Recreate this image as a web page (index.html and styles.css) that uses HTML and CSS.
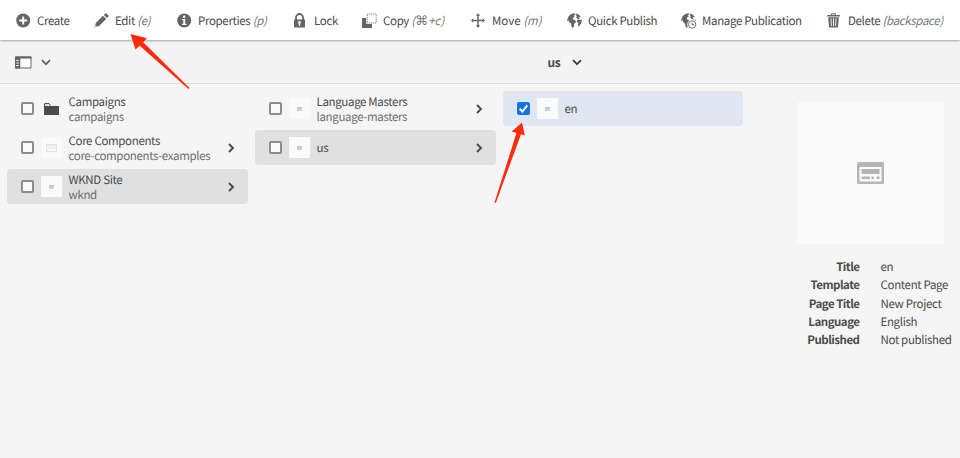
FILE: index.html
```html
<!DOCTYPE html>
<html lang="en">
<head>
<meta charset="utf-8">
<title>Sites</title>
<link rel="stylesheet" href="styles.css">
</head>
<body>
<svg class="defs" aria-hidden="true">
  <symbol id="chev" viewBox="0 0 8 10"><path d="M2 1l4 4-4 4" fill="none" stroke="currentColor" stroke-width="1.9"/></symbol>
  <symbol id="down" viewBox="0 0 10 7"><path d="M1 1.2l4 4 4-4" fill="none" stroke="currentColor" stroke-width="1.7"/></symbol>
  <symbol id="page" viewBox="0 0 27 22"><path fill-rule="evenodd" fill="currentColor" d="M1.5 0h24A1.5 1.5 0 0 1 27 1.500v19a1.500 1.500 0 0 1-1.500 1.500h-24A1.500 1.500 0 0 1 0 20.500v-19A1.500 1.500 0 0 1 1.500 0zM2.500 5v14.500h22V5zM4.500 7h18v5h-18zM4.500 14.500h8.500V17H4.500zM14.500 14.500H17V17h-2.500zM19.500 14.500h3V17h-3z"/></symbol>
  <symbol id="globe" viewBox="0 0 15 15"><path fill="currentColor" d="M5 .8L7.500.3l1 1-1.500 1 .6 1.200-1.600 1.300-.2 1.700 1.700.3 1.500 1.400-.5 1.600-1.300 1-.2 2.700-1.100 1.400L4.500 13.600l-.4-2.800-2-1.700-.6-2.200L.3 8.500C0 5.200 2 2 5 .8zM9.500.5c2 .7 3.700 2.200 4.500 4l-1.500-.6-.9.800 1 1.100-1.500.6-1.200-1.200-.8-.8.8-1.200-1-.9zM14.600 6.300c.4 3-.9 5.900-3.200 7.500l-.5-2 .6-1.700-1.700-1.300.5-1.600 2-.8 1.100.6z"/></symbol>
</svg>
<header class="toolbar">
  <div class="action">
    <svg class="icon" viewBox="0 0 15 15"><circle cx="7.200" cy="7.500" r="7" fill="currentColor"/><path d="M7.200 3.500v8M3.200 7.500h8" stroke="#fff" stroke-width="1.900"/></svg>
    <span class="label">Create</span>
  </div>
  <div class="action">
    <svg class="icon" viewBox="0 0 15 15"><path fill="currentColor" d="M.3 14.600l1.500-4.700L9 2.700l3.200 3.200L5 13.100zM9.800 1.900L11.400.4q.5-.4 1 0l2.100 2.100q.4.500 0 1L13 5.100z"/><path d="M1.500 11.900l1.500 1.500-2 .7z" fill="#fff"/></svg>
    <span class="label">Edit <i>(e)</i></span>
  </div>
  <div class="action">
    <svg class="icon" viewBox="0 0 15 15"><circle cx="7.200" cy="7.500" r="7" fill="currentColor"/><circle cx="7.200" cy="3.800" r="1.250" fill="#fff"/><path d="M5.200 6h3v4.800h1.300v1.300H5.100v-1.300h1.200V7.300H5.200z" fill="#fff"/></svg>
    <span class="label">Properties <i>(p)</i></span>
  </div>
  <div class="action">
    <svg class="icon" viewBox="0 0 15 15"><path fill="currentColor" d="M1 6.500h11v8H1z"/><path d="M3 7V4.500a3.500 3.500 0 0 1 7 0V7" fill="none" stroke="currentColor" stroke-width="1.800"/><circle cx="6.500" cy="9.500" r="1.400" fill="#fff"/><path d="M6.500 9.500v3.300" stroke="#fff" stroke-width="1.300"/></svg>
    <span class="label">Lock</span>
  </div>
  <div class="action">
    <svg class="icon" viewBox="0 0 15 15"><path fill="currentColor" d="M0 5h4.200v6H10v4H0z"/><path d="M5.200 1h9v9h-9z" fill="none" stroke="currentColor" stroke-width=".8" stroke-dasharray="1.200 .8"/></svg>
    <span class="label">Copy <i class="keys">(<span class="cmd">⌘</span>+c)</i></span>
  </div>
  <div class="action">
    <svg class="icon" viewBox="0 0 15 15"><path d="M7 2v11M1.500 7.500h11" stroke="currentColor" stroke-width="1.400"/><path fill="currentColor" d="M7 .3l2.200 2.500H4.800zM7 14.700l2.200-2.500H4.800zM0 7.500l2.300-2.200v4.400zM14 7.500l-2.300-2.200v4.400z"/></svg>
    <span class="label wide">Move <i>(m)</i></span>
  </div>
  <div class="action">
    <svg class="icon"><use href="#globe"/></svg>
    <span class="label">Quick Publish</span>
  </div>
  <div class="action">
    <svg class="icon" viewBox="0 0 15 15"><use href="#globe" width="15" height="15"/><circle cx="11.200" cy="11.500" r="5" fill="#fff"/><circle cx="11.200" cy="11.500" r="3.700" fill="#fff" stroke="currentColor" stroke-width=".9"/><path d="M11 9.300v2.400h2" fill="none" stroke="currentColor" stroke-width=".9"/></svg>
    <span class="label">Manage Publication</span>
  </div>
  <div class="action">
    <svg class="icon" viewBox="0 0 15 15"><path d="M4.500 2V.8h4V2" fill="none" stroke="currentColor"/><path fill="currentColor" d="M.2 1.900h12.600v1.600H.2zM1.200 4.300h10.600l-.8 10.300H2z"/><path d="M4 5.300l.4 7.900M6.500 5.300v7.900M9 5.300l-.4 7.900" stroke="#fff" stroke-width=".9"/></svg>
    <span class="label">Delete <i>(backspace)</i></span>
  </div>
</header>
<nav class="subbar">
  <div class="rail">
    <svg class="railicon" viewBox="0 0 17 13"><path d="M.5 1h15.500v11H.5z" fill="#fff" stroke="currentColor"/><path fill="currentColor" d="M0 .5h16.500v2H0zM0 .5h5.300V12.500H0z"/><path d="M1.300 4.500h2.400M1.300 7h2.400M1.300 9.500h2.400" stroke="#fff" stroke-width="1"/></svg>
    <svg class="down"><use href="#down"/></svg>
  </div>
  <div class="crumb"><b>us</b><svg class="down dark"><use href="#down"/></svg></div>
</nav>
<main class="content">
  <section class="column">
    <div class="row">
      <span class="box"></span>
      <span class="thumb bare"><svg class="folder" viewBox="0 0 15 12"><path fill="#4b4b4b" d="M0 3h15v9H0z"/><path d="M.5 3V1q0-.5.5-.5h4L6.500 2.500" fill="#ddd" stroke="#4b4b4b"/></svg></span>
      <div class="names"><span>Campaigns</span><small>campaigns</small></div>
    </div>
    <div class="row">
      <span class="box"></span>
      <span class="thumb"><svg class="component" viewBox="0 0 11 8"><path d="M.5.5h10v7H.5zM.5 2h10M2 4h3M6 4h3" fill="none" stroke="#e3e3e3"/></svg></span>
      <div class="names"><span>Core Components</span><small>core-components-examples</small></div>
      <svg class="chev"><use href="#chev"/></svg>
    </div>
    <div class="row open">
      <span class="box"></span>
      <span class="thumb"><svg class="mini"><use href="#page"/></svg></span>
      <div class="names"><span>WKND Site</span><small>wknd</small></div>
      <svg class="chev"><use href="#chev"/></svg>
    </div>
  </section>
  <section class="column">
    <div class="row">
      <span class="box"></span>
      <span class="thumb"><svg class="mini"><use href="#page"/></svg></span>
      <div class="names"><span>Language Masters</span><small>language-masters</small></div>
      <svg class="chev"><use href="#chev"/></svg>
    </div>
    <div class="row open">
      <span class="box"></span>
      <span class="thumb"><svg class="mini"><use href="#page"/></svg></span>
      <div class="names"><span>us</span></div>
      <svg class="chev"><use href="#chev"/></svg>
    </div>
  </section>
  <section class="column">
    <div class="row selected">
      <span class="box checked"><svg viewBox="0 0 12 12"><path d="M2.500 6.200l2.500 2.600 4.500-5.600" fill="none" stroke="#fff" stroke-width="1.800"/></svg></span>
      <span class="thumb"><svg class="mini"><use href="#page"/></svg></span>
      <div class="names"><span>en</span></div>
    </div>
  </section>
  <aside class="preview">
    <div class="card"><svg class="big"><use href="#page"/></svg></div>
    <dl class="meta">
      <dt>Title</dt><dd>en</dd>
      <dt>Template</dt><dd>Content Page</dd>
      <dt>Page Title</dt><dd>New Project</dd>
      <dt>Language</dt><dd>English</dd>
      <dt>Published</dt><dd>Not published</dd>
    </dl>
  </aside>
</main>
<svg class="pointers" viewBox="0 0 960 458" aria-hidden="true">
  <path fill="#ff2a0a" d="M130.500 34l16.500 4.200-3.800 4L189.500 88l-1 1-48.700-43.300-4.300 3.800z"/>
  <path fill="#ff2a0a" d="M522 122.500l2.800 13-3.800-1.200L495.800 203l-1.300-.5 22-69.500-4.800-1.500z"/>
</svg>
</body>
</html>
```

FILE: styles.css
```css
* { box-sizing: border-box; }
body {
  margin: 0;
  height: 458px;
  overflow: hidden;
  background: #f5f5f5;
  color: #4b4b4b;
  font: 11.5px/15px "Noto Sans CJK SC", "Noto Sans", sans-serif;
  letter-spacing: -.34px;
  text-rendering: geometricPrecision;
}
svg { display: block; flex: none; }
.defs { position: absolute; width: 0; height: 0; }
.toolbar {
  display: grid;
  grid-template-columns: 78px 83px 116px 69px 109px 96px 114px 146px auto;
  height: 40px;
  padding-left: 16px;
  align-items: center;
  background: #fff;
  box-shadow: 0 1px 2px rgba(0, 0, 0, .32);
  position: relative;
}
.action { display: flex; align-items: center; gap: 6px; white-space: nowrap; color: #656565; }
.icon { width: 15px; height: 15px; overflow: visible; }
.label { padding-top: 2px; color: #4b4b4b; }
.wide { letter-spacing: 0; }
.label i { color: #777; }
.keys { letter-spacing: 0; }
.cmd { font-family: "DejaVu Sans", sans-serif; font-size: 13px; line-height: 1; }
.subbar {
  display: grid;
  grid-template-columns: 547.500px 1fr;
  align-items: center;
  height: 44px;
  padding-top: 1px;
  border-bottom: 1px solid #dedede;
  background: #f4f4f4;
}
.rail { display: flex; align-items: center; gap: 9px; padding-left: 15px; color: #656565; }
.railicon { width: 17px; height: 13px; }
.down { width: 10px; height: 7px; }
.dark { color: #3c3c3c; }
.crumb { display: flex; align-items: center; gap: 12px; font-size: 12px; }
.content { display: flex; gap: 7.500px; padding: 7px 0 0 7px; }
.column { display: flex; flex-direction: column; gap: 4px; width: 240.500px; }
.column:nth-child(3) { width: 240px; }
.row { display: flex; align-items: center; height: 35px; padding: 0 13px 0 13.500px; border-radius: 4px; }
.open { background: #e0e0e0; }
.selected { background: #e0e7f3; }
.box { width: 13px; height: 13px; border: 2px solid #8c8c8c; border-radius: 2px; background: #fafafa; }
.checked { border: 0; background: #1473e6; }
.thumb { display: flex; align-items: center; justify-content: center; width: 21px; height: 21px; margin: 0 7px; background: #fafafa; color: #c4c4c4; }
.bare { background: none; }
.folder { width: 15px; height: 12px; }
.component { width: 11px; height: 8px; }
.mini { width: 5px; height: 4px; background: #d8d8d8; }
.names { display: flex; flex-direction: column; flex: 1; padding-top: 2px; white-space: nowrap; }
.names small { font-size: 11.5px; color: #6e6e6e; }
.chev { width: 8px; height: 10px; color: #4b4b4b; }
.preview { flex: 1; padding-left: 46px; }
.card { display: flex; align-items: center; justify-content: center; width: 147px; height: 142px; margin-top: 11px; background: #fafafa; color: #b5b5b5; }
.big { width: 27px; height: 22px; }
.meta { display: grid; grid-template-columns: 63px 1fr; column-gap: 21px; grid-auto-rows: 18.250px; align-items: center; margin: 14.500px 0 0; white-space: nowrap; }
.meta dt { justify-self: end; font-weight: 700; letter-spacing: -.5px; }
.meta dd { margin: 0; }
.pointers { position: absolute; left: 0; top: 0; width: 960px; height: 458px; pointer-events: none; }
```
